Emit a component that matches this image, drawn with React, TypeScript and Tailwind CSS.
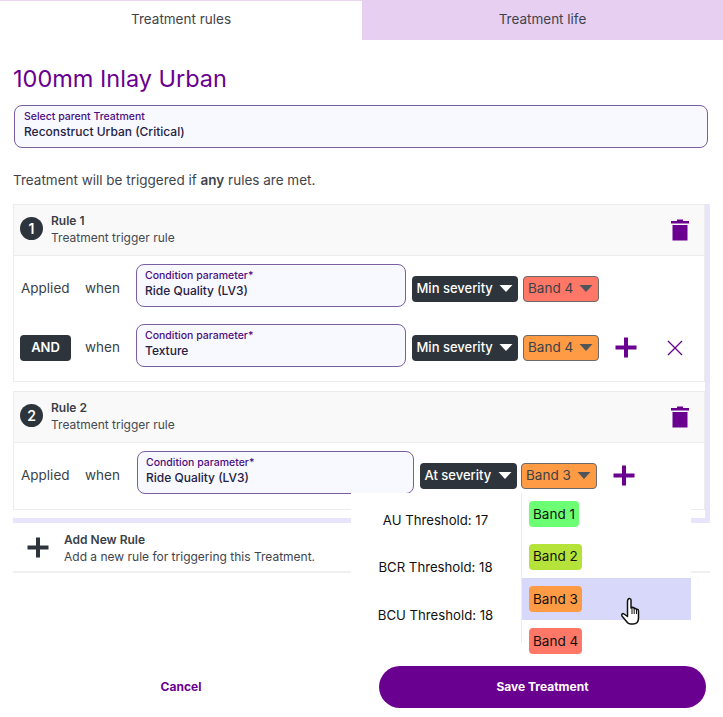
import React from "react";

const Caret = ({ className }: { className: string }) => (
  <svg width="14" height="7" viewBox="0 0 14 7" className={`${className} shrink-0`}>
    <path d="M0.500 0h13L7 7z" fill="currentColor" />
  </svg>
);

const Plus = ({ className }: { className: string }) => (
  <svg width="22" height="21" viewBox="0 0 22 21" className={className}>
    <path d="M9 0.500h4V8.500h8.500v4H13v8H9v-8H0.500v-4H9z" fill="currentColor" />
  </svg>
);

const Trash = () => (
  <svg width="18" height="22" viewBox="0 0 18 22" className="text-[#6a008f] mt-[2px]">
    <path d="M6 0.500h6V2h6v2.500H0V2h6zM1.500 6h15v15.500h-15z" fill="currentColor" />
  </svg>
);

const Field = ({ label, value, w, top }: { label: string; value: string; w: string; top: string }) => (
  <div className={`${w} ${top} h-[43px] self-start shrink-0 rounded-lg border border-[#7a5ea0] bg-[#f8f8ff] pl-[8px] pt-[3px]`}>
    <div className="text-[10.500px] leading-[15px] font-medium text-[#4b0f80]">{label}</div>
    <div className="text-[12px] leading-[16px] font-medium text-[#25213f]">{value}</div>
  </div>
);

const Sev = ({ label, w }: { label: string; w: string }) => (
  <div className={`${w} h-[26px] shrink-0 rounded-[4px] bg-[#2d343c] text-white flex items-center justify-between pl-[4.500px] pr-[5px] text-[13px] font-medium whitespace-nowrap`}>
    <span>{label}</span>
    <Caret className="text-white" />
  </div>
);

const BandSel = ({ label, color, w }: { label: string; color: string; w: string }) => (
  <div className={`${w} ${color} h-[26px] shrink-0 rounded-[4px] border border-[#6b6b6b] text-[#3c4048] flex items-center justify-between pl-[4px] pr-[5px] text-[13.500px] whitespace-nowrap`}>
    <span>{label}</span>
    <Caret className="text-[#50555c]" />
  </div>
);

const RuleHeader = ({ n, title }: { n: string; title: string }) => (
  <div className="h-[51px] bg-[#f9f9f9] border-b border-[#ececec] flex items-center pl-[6px] pr-[15px] pb-[2px]">
    <div className="w-[23px] h-[23px] -mt-[1px] rounded-full bg-[#2d343c] text-white flex items-center justify-center text-[14px] font-semibold">{n}</div>
    <div className="ml-[8px] flex-1">
      <div className="text-[12px] leading-[17px] font-semibold text-[#3a3f47]">{title}</div>
      <div className="text-[12px] leading-[17px] text-[#444a52]">Treatment trigger rule</div>
    </div>
    <Trash />
  </div>
);

const BandItem = ({ label, color, h, active }: { label: string; color: string; h: string; active?: boolean }) => (
  <div className={`${h} flex items-center pl-[8px] ${active ? "bg-[#d8d8fa]" : ""}`}>
    <span className={`${color} rounded-[4px] h-[26px] flex items-center px-[4px] text-[13.500px] text-[#111]`}>{label}</span>
  </div>
);

export default function App() {
  return (
    <div className="relative w-[723px] h-[717px] bg-white overflow-hidden font-['Inter',sans-serif] text-[#3a3f47]">
      <div className="flex h-[40px]">
        <div className="w-[362px] border-t border-[#e8d5f0] pb-[2px] flex items-center justify-center text-[13.500px] text-[#3f444c]">Treatment rules</div>
        <div className="flex-1 bg-[#e6cff0] pb-[2px] flex items-center justify-center text-[13.500px] text-[#3f444c]">Treatment life</div>
      </div>

      <div className="pl-[13px] pr-[13px]">
        <h1 className="mt-[24px] text-[23.500px] leading-[30px] text-[#6a008f]">100mm Inlay Urban</h1>
        <div className="mt-[11px] ml-[1px] w-[694px] h-[43px] rounded-lg border border-[#7a5ea0] bg-[#f8f8ff] pl-[9px] pt-[3px]">
          <div className="text-[10.500px] leading-[15px] font-medium text-[#4b0f80]">Select parent Treatment</div>
          <div className="text-[12px] leading-[16px] font-medium text-[#25213f]">Reconstruct Urban (Critical)</div>
        </div>
        <p className="mt-[23px] text-[13.500px] leading-[18px] text-[#3f444c]">
          Treatment will be triggered if <b className="font-semibold">any</b> rules are met.
        </p>

        <div className="mt-[15px] w-[697px] border-r-[5px] border-b-[5px] border-[#e8e4fb] pb-[8px]">
          <div className="border border-[#ececec] h-[178px]">
            <RuleHeader n="1" title="Rule 1" />
            <div className="flex items-center h-[42px] mt-[8px] pl-[7px] pt-[7px] text-[13.500px]">
              <span className="w-[64px]">Applied</span>
              <span className="w-[51px]">when</span>
              <Field label="Condition parameter*" value="Ride Quality (LV3)" w="w-[270px]" top="-mt-[7px]" />
              <div className="ml-[6px]"><Sev label="Min severity" w="w-[106px]" /></div>
              <div className="ml-[5px]"><BandSel label="Band 4" color="bg-[#ff7766]" w="w-[76px]" /></div>
            </div>
            <div className="flex items-center h-[42px] mt-[18px] pl-[7px] pt-[5px] text-[13.500px]">
              <span className="w-[51px] h-[26px] -ml-[1px] mr-[14px] rounded-[4px] bg-[#2d343c] text-white flex items-center justify-center text-[13px] font-semibold">AND</span>
              <span className="w-[51px]">when</span>
              <Field label="Condition parameter*" value="Texture" w="w-[270px]" top="-mt-[5px]" />
              <div className="ml-[6px]"><Sev label="Min severity" w="w-[106px]" /></div>
              <div className="ml-[5px]"><BandSel label="Band 4" color="bg-[#ff9b45]" w="w-[76px]" /></div>
              <div className="ml-[16px]"><Plus className="text-[#6a008f]" /></div>
              <svg width="18" height="18" viewBox="0 0 18 18" className="ml-[29px] text-[#6a008f]">
                <path d="M2 2l14 14M16 2L2 16" stroke="currentColor" strokeWidth="1.300" fill="none" />
              </svg>
            </div>
          </div>

          <div className="mt-[9px] border border-[#ececec] h-[119px]">
            <RuleHeader n="2" title="Rule 2" />
            <div className="flex items-center h-[42px] mt-[8px] pl-[7px] pt-[7px] text-[13.500px]">
              <span className="w-[64px]">Applied</span>
              <span className="w-[52px]">when</span>
              <Field label="Condition parameter*" value="Ride Quality (LV3)" w="w-[277px]" top="-mt-[7px]" />
              <div className="ml-[6px]"><Sev label="At severity" w="w-[97px]" /></div>
              <div className="ml-[4px]"><BandSel label="Band 3" color="bg-[#ff9b45]" w="w-[76px]" /></div>
              <div className="ml-[16px]"><Plus className="text-[#6a008f]" /></div>
            </div>
          </div>
        </div>

        <div className="w-[697px] h-[50px] border-b-2 border-[#f0f0f0] flex items-center pl-[14px]">
          <Plus className="text-[#2d343c]" />
          <div className="ml-[15px]">
            <div className="text-[12px] leading-[17px] pt-[1px] font-semibold text-[#3a3f47]">Add New Rule</div>
            <div className="text-[12px] leading-[17px] text-[#3f444c]">Add a new rule for triggering this Treatment.</div>
          </div>
        </div>
      </div>

      <div className="absolute left-[351px] top-[493px] w-[340px] h-[169px] bg-white flex text-[13.200px] text-[#111]">
        <div className="w-[170px] flex flex-col pt-[4px] pr-[1px]">
          <div className="h-[47.500px] flex items-center justify-center">AU Threshold: 17</div>
          <div className="h-[47.500px] flex items-center justify-center">BCR Threshold: 18</div>
          <div className="h-[47.500px] flex items-center justify-center">BCU Threshold: 18</div>
        </div>
        <div className="relative flex-1">
          <div className="absolute left-0 top-0 w-px h-[150px] bg-[#ececec]" />
          <BandItem label="Band 1" color="bg-[#6dff73]" h="h-[42px]" />
          <BandItem label="Band 2" color="bg-[#b5e33a]" h="h-[43px]" />
          <BandItem label="Band 3" color="bg-[#ff9b45]" h="h-[42px]" active />
          <BandItem label="Band 4" color="bg-[#ff7766]" h="h-[42px]" />
        </div>
      </div>

      <svg width="24" height="30" viewBox="0 0 24 30" className="absolute left-[620px] top-[597px]">
        <path d="M8 2.500c1-1.500 3-1 3 .500v8l1-.5c1-.5 2 0 2 1 1-.5 2.200 0 2.200 1 1-.5 2.300 0 2.300 1.500v7c0 4-2 6-5.500 6h-2.500c-2 0-3-1-4-2.500L2 19c-1-1.500.5-3 2-2l3.500 2.500V4z" fill="#fff" stroke="#111" strokeWidth="1.500" strokeLinejoin="round" />
        <path d="M12 11v6M14.200 12v5M16.500 13v4" stroke="#111" strokeWidth="1" />
      </svg>

      <div className="absolute left-0 right-0 top-[666px] flex items-center">
        <div className="w-[362px] h-[42px] flex items-center justify-center text-[12px] font-bold text-[#6a008f]">Cancel</div>
        <div className="ml-[17px] w-[327px] h-[42px] rounded-full bg-[#6a008f] text-white flex items-center justify-center text-[12px] font-bold">Save Treatment</div>
      </div>
    </div>
  );
}
